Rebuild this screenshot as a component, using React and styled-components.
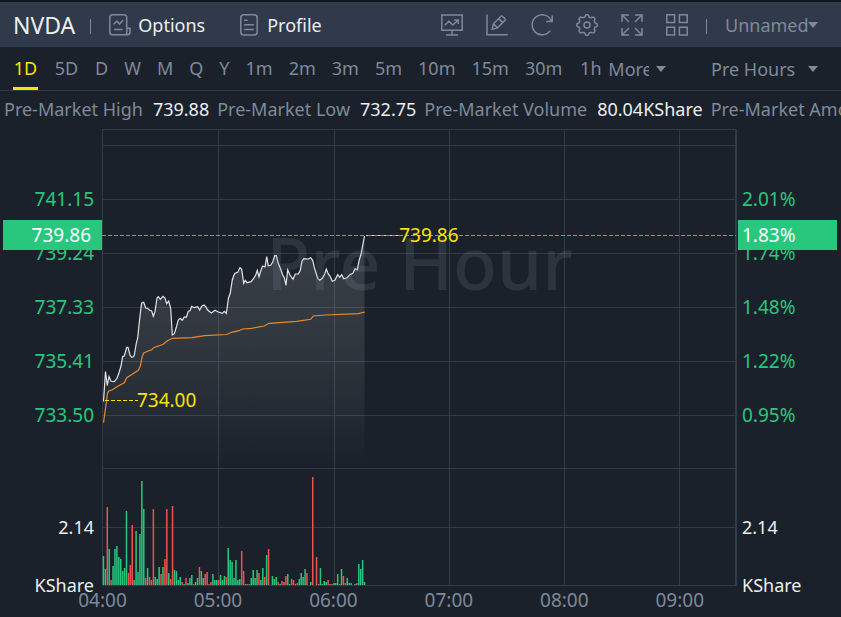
import React from "react";
import styled, { createGlobalStyle, css } from "styled-components";

const color = {
  page: "#1a212a",
  header: "#303a4a",
  line: "#2f3b47",
  muted: "#7f899a",
  text: "#eceef0",
  green: "#28c77e",
  red: "#ef5350",
  yellow: "#fbe106",
  orange: "#e8892b",
};

const GlobalStyle = createGlobalStyle`
  * { box-sizing: border-box; }
  html, body { margin: 0; background: ${color.page}; overflow-x: hidden; }
  body, button, select {
    font-family: "Noto Sans", "Open Sans", sans-serif;
    font-size: 18px;
    line-height: 24px;
  }
`;

const Page = styled.main`
  color: ${color.muted};
  border-top: 2px solid #11161c;
  overflow: hidden;
`;

const Header = styled.header`
  display: flex;
  align-items: center;
  justify-content: space-between;
  height: 45px;
  padding: 0 23px 0 13px;
  background: ${color.header};
`;

const Group = styled.div`
  display: flex;
  align-items: center;
  gap: ${(p) => p.$gap}px;
`;

const Ticker = styled.h1`
  margin: 0;
  font-size: 23px;
  font-weight: 400;
  line-height: 24px;
  color: ${color.text};
`;

const Divider = styled.span`
  width: 1px;
  height: 15px;
  margin-top: 3px;
  background: ${color.muted};
`;

const plainButton = css`
  margin: 0;
  padding: 0;
  border: 0;
  background: none;
  color: inherit;
  cursor: pointer;
`;

const LinkButton = styled.button`
  ${plainButton}
  display: flex;
  align-items: center;
  gap: 7px;
  color: ${color.text};
`;

const ToolButton = styled.button`
  ${plainButton}
  display: flex;
`;

const Icon = styled.svg`
  width: 22px;
  height: 22px;
  flex: none;
  fill: none;
  stroke: ${color.muted};
  stroke-width: 1.5;
`;

const Dropdown = styled.label`
  display: flex;
  align-items: center;
  gap: ${(p) => p.$gap}px;
`;

const Select = styled.select`
  appearance: none;
  width: ${(p) => p.$width}px;
  padding: 0;
  border: 0;
  background: none;
  color: inherit;
  overflow: hidden;
`;

const Caret = styled.svg`
  width: 10px;
  height: 6px;
  fill: ${color.muted};
`;

const PeriodBar = styled.nav`
  display: flex;
  justify-content: space-between;
  height: 44px;
  padding: 0 23px 0 13px;
  border-bottom: 1px solid ${color.line};
`;

const Tab = styled.button`
  ${plainButton}
  height: 43px;
  min-width: ${(p) => (p.$short ? 0 : 25)}px;
  padding-top: 2px;
  border-bottom: 3px solid ${(p) => (p.$active ? color.yellow : "transparent")};
  color: ${(p) => (p.$active ? color.yellow : "inherit")};
`;

const Stats = styled.dl`
  display: flex;
  align-items: center;
  gap: 8px;
  height: 38px;
  margin: 0;
  padding: 0 0 2px 4px;
  white-space: nowrap;
`;

const Stat = styled.div`
  display: flex;
  gap: 10px;
`;

const StatValue = styled.dd`
  margin: 0;
  color: ${color.text};
`;

const Chart = styled.section`
  display: grid;
  grid-template-columns: 102px minmax(0, 1fr) 104px;
  grid-template-rows: auto 28px;
  font-size: 19px;
`;

const Axis = styled.div`
  position: relative;
  grid-row: 1 / 3;
  grid-column: ${(p) => (p.$right ? 3 : 1)};
  display: flex;
  flex-direction: column;
  padding: 43px ${(p) => (p.$right ? "0 0 5px" : "8px 0 0")};
  text-align: ${(p) => (p.$right ? "left" : "right")};
`;

const PriceLabel = styled.span`
  line-height: 54px;
  color: ${color.green};
`;

const VolumeLabel = styled.span`
  line-height: 58px;
  font-size: 18px;
  color: ${color.text};
`;

const VolumeLabels = styled.div`
  display: flex;
  flex-direction: column;
  margin-top: 56px;
`;

const PriceTag = styled.strong`
  position: absolute;
  top: 91px;
  left: ${(p) => (p.$right ? 1 : 3)}px;
  width: 99px;
  padding: 0 ${(p) => (p.$right ? 4 : 11)}px;
  background: ${color.green};
  color: #fff;
  font-weight: 400;
  line-height: 30px;
`;

const Plot = styled.div`
  position: relative;
  grid-column: 2;
  grid-row: 1;
`;

const PlotSvg = styled.svg`
  display: block;
  width: 100%;
  height: 457px;
  fill: none;
`;

const Watermark = styled.span`
  position: absolute;
  inset: 88px 0 auto;
  text-align: center;
  font-weight: 500;
  font-size: 72px;
  line-height: 90px;
  color: rgba(150, 160, 180, 0.15);
`;

const PriceMark = styled.span`
  position: absolute;
  left: ${(p) => p.$left}%;
  top: ${(p) => p.$top}px;
  line-height: 24px;
  color: ${color.yellow};
`;

const TimeAxis = styled.div`
  grid-column: 2;
  grid-row: 2;
  display: grid;
  grid-template-columns: repeat(5, 2fr) 1fr;
`;

const TimeLabel = styled.time`
  display: flex;
  justify-content: center;
  width: 1px;
  line-height: 28px;
`;

const OptionsIcon = () => (
  <Icon viewBox="0 0 22 22">
    <path d="M17.7 14V3.5Q17.7.8 15 .8H3.5Q.8.8.8 3.5V18Q.8 20.8 3.5 20.8H18.3Q21 20.8 21 18V14.3H17.8V18.5Q17.8 20.8 16 20.8" />
    <path d="M4.5 10.5L8 7L10.5 10L14 6.3M5 15.6H13.5" />
  </Icon>
);

const ProfileIcon = () => (
  <Icon viewBox="0 0 22 22">
    <rect x="2.8" y=".8" width="16.4" height="20.2" rx="3" />
    <path d="M6.2 6.2H9.5M6.2 10.7H15.8M6.2 15.4H15.8" />
  </Icon>
);

const gearPath = (() => {
  const points = [];
  for (let i = 0; i < 96; i += 1) {
    const a = (i / 96) * Math.PI * 2;
    const wave = Math.max(-1, Math.min(1, 1.7 * Math.cos(a * 8)));
    const r = 9.2 + wave;
    points.push(`${(11 + r * Math.sin(a)).toFixed(2)} ${(11 - r * Math.cos(a)).toFixed(2)}`);
  }
  return `M${points.join("L")}Z`;
})();

const tools = [
  { name: "Indicators", art: <path d="M.8 1H21.2V16.2H.8ZM11 16.2V20.8M5 20.9H17M3.7 11.2L8 7.2L11.8 11L17 6.2M13.2 5.9H17.3V10" /> },
  { name: "Draw", art: <path d="M1 .5V20.8H21.8M6.2 15.2L7.4 9.8L14.7 2.5Q15.7 1.6 16.7 2.5L18.8 4.6Q19.7 5.6 18.8 6.6L11.5 13.9ZM12.7 4.6L16.7 8.6M7.4 9.8L11.5 13.9" /> },
  { name: "Refresh", art: <path d="M19.3 16.6A10 10 0 1 1 20.5 7.3M21.2 1.5V7.5H15.2" /> },
  { name: "Settings", art: <><path d={gearPath} /><circle cx="11" cy="11" r="3" /></> },
  { name: "Full screen", art: <path d="M1 8V1H8M1.3 1.3L8 8M14 1H21V8M20.7 1.3L14 8M1 14V21H8M1.3 20.7L8 14M21 14V21H14M20.7 20.7L14 14" /> },
  { name: "Layout", art: <path d="M.8 .8H8.6V8.6H.8ZM13.4 .8H21.2V8.6H13.4ZM.8 13.2H8.6V21H.8ZM13.4 13.2H21.2V21H13.4Z" /> },
];

const periods = ["1D", "5D", "D", "W", "M", "Q", "Y", "1m", "2m", "3m", "5m", "10m", "15m", "30m", "1h"];

const stats = [
  ["Pre-Market High", "739.88"],
  ["Pre-Market Low", "732.75"],
  ["Pre-Market Volume", "80.04KShare"],
  ["Pre-Market Amount", "58.93M"],
];

const prices = ["741.15", "739.24", "737.33", "735.41", "733.50"];
const changes = ["2.01%", "1.74%", "1.48%", "1.22%", "0.95%"];
const times = ["04:00", "05:00", "06:00", "07:00", "08:00", "09:00"];

const priceLine =
  "103.5,401.5 105.5,371.5 107.3,385.5 109,376.5 111,381.3 114.3,381.6 117,378.3 119,372.7 121,366 122.7,356.3 124.3,356 126.7,347.3 128,347.3 130,355 131.7,357.3 133.3,356.7 134.3,355 136.3,343.3 137.7,338 139,325 140.7,310 141.7,303 143.7,302.3 145.7,308 147.7,308.3 149.7,310.3 151.7,311 153.3,316.3 155,311.7 157,298 158.3,296.7 160.3,299.3 163,296.3 165,298 166.7,303.7 168.7,301 170.7,308.3 172.3,335 174.3,333.7 176.3,327.3 178.3,320 180.3,318.3 182.3,320.3 184.3,317 186.3,317.3 188.3,311.3 190,310.7 191.7,306.3 194.3,307.7 197.7,306.7 199.7,310 201.7,306.3 204,305 205.7,306.7 207.7,310 211.3,313 215,310.3 217.7,311.7 222.3,313.3 224.3,311.3 226.3,313.5 228.5,298 230.3,293 232.3,280 233.7,275.7 235,273.3 237.7,272.3 240,267.7 241.7,269.3 243.7,283.3 245.3,280.3 247,282.7 251,281.7 253.3,279 255.7,275 257.3,270.3 259,276.7 261,270 262.7,266 265,267 266.7,256.7 268.3,265.7 270.7,265.3 272.7,262 274.7,255.7 276.3,255.7 278.3,263.3 280.7,269.3 282.7,275 284.3,277.7 286,285.3 287.7,269.7 290,275 293,279.3 295.3,274 298.3,274 300.3,270.3 302,261 303.7,258.7 308.3,259 310.7,257.7 312.7,260.3 314.3,267.3 316,273 317.7,278.3 319.7,280.3 322.3,278.3 324.7,274 326.3,269 328.3,274 330,276 332.3,281.3 335,280 337.7,274.7 339.7,277.3 341.7,274.7 343.7,278.7 347,277.7 350,274.7 353,273 355,268.7 357.3,269.7 359.3,259.7 361,254.3 364.5,236";

const averageLine =
  "103.5,422.7 105.3,410 107.5,393.5 108.5,391.3 112.3,389.7 118.3,386 124.3,382.7 126.7,377.7 132.3,374.3 138.3,370.3 140.3,366 142,357.3 143.7,353 148.3,351 151.7,349.7 153.7,347.7 163.3,344.3 167,341 172.3,338.3 191.7,337.7 205,335.7 226.7,334.5 231.7,332.3 239,330.7 242.7,329 251.7,328.3 264.3,326 269,323.3 296.7,321.3 310.7,319.3 313.3,316 325,315 358.3,313.7 365,312";

const volumes =
  "g29 g16 r78 g36 r5 g19 g36 g39 g28 g26 g14 g17 g74 r12 r20 r60 g5 g54 g13 g51 g104 g76 r7 g17 r8 r5 r76 g8 g6 g18 r11 g18 r26 r76 g12 r6 r79 g15 g14 g5 g8 r3 g1 r7 g2 g7 g10 r1 g3 g7 r18 g14 g7 r11 r13 r1 r3 g11 g5 g5 r5 g10 g5 g9 r8 g37 g25 g23 g7 g25 g5 g6 r34 r14 g1 r1 g1 g7 g15 g7 g15 r12 g5 g17 r8 g30 r36 g0 g9 g6 g8 r3 g1 r4 r3 r9 g11 g1 r6 r5 r1 r2 g6 g12 g8 g16 r12 g0 g3 r108 g0 r28 r1 g17 g1 g4 g3 r5 r1 r1 g2 g2 g11 r1 g16 r9 r2 g7 g2 g2 g0 g1 r2 g21 g16 g25 g3"
    .split(" ")
    .map((v) => ({ fill: v[0] === "g" ? color.green : color.red, height: Number(v.slice(1)) }));

const rowLines = [145, 199, 253, 307, 361, 415, 468, 527];
const hourLines = [218, 334, 449, 564, 679];

const CaretDown = () => (
  <Caret viewBox="0 0 10 6" aria-hidden="true">
    <path d="M0 0H10L5 6Z" />
  </Caret>
);

const PricePlot = () => (
  <PlotSvg viewBox="102 129 635 457" preserveAspectRatio="none" role="img" aria-label="Pre-market price and volume">
    <defs>
      <linearGradient id="area" gradientUnits="userSpaceOnUse" x1="0" y1="236" x2="0" y2="468">
        <stop offset="0" stopColor="#fff" stopOpacity=".14" />
        <stop offset=".45" stopColor="#fff" stopOpacity=".1" />
        <stop offset="1" stopColor="#fff" stopOpacity="0" />
      </linearGradient>
    </defs>
    <g stroke={color.line} shapeRendering="crispEdges">
      {rowLines.map((y) => <path key={y} d={`M102 ${y + 0.5}H736`} />)}
      {hourLines.map((x) => <path key={x} d={`M${x + 0.5} 129V586`} />)}
      <path d="M102 129.5H737M102 585.5H737M102.5 129V586" />
      <path d="M736 129V586" strokeWidth="2" />
    </g>
    <polygon points={`103.5,468 ${priceLine} 364.5,468`} fill="url(#area)" />
    {volumes.map((v, i) => (
      <rect key={i} x={102.7 + i * 1.92} y={585 - v.height} width="1.5" height={v.height} fill={v.fill} />
    ))}
    <polyline points={averageLine} stroke={color.orange} strokeWidth="1.2" />
    <polyline points={priceLine} stroke="#e2e4e6" strokeWidth="1.2" />
    <path d="M366 235.5H399M105 400.5H138" stroke={color.yellow} strokeDasharray="4 2" />
    <path d="M102 235.5H365M399 235.5H736" stroke={color.green} strokeDasharray="4 2" />
    <path d="M368 235.5H399" stroke={color.green} strokeDasharray="4 2" />
  </PlotSvg>
);

export default function App() {
  return (
    <Page>
      <GlobalStyle />
      <Header>
        <Group $gap={33}>
          <Group $gap={18}>
            <Group $gap={15}>
              <Ticker>NVDA</Ticker>
              <Divider />
            </Group>
            <LinkButton><OptionsIcon />Options</LinkButton>
          </Group>
          <LinkButton><ProfileIcon />Profile</LinkButton>
        </Group>
        <Group $gap={18}>
          <Group $gap={23}>
            {tools.map((t) => (
              <ToolButton key={t.name} aria-label={t.name}>
                <Icon viewBox="0 0 22 22">{t.art}</Icon>
              </ToolButton>
            ))}
          </Group>
          <Divider />
          <Dropdown $gap={0}>
            <Select $width={83} aria-label="Layout name"><option>Unnamed</option></Select>
            <CaretDown />
          </Dropdown>
        </Group>
      </Header>

      <PeriodBar>
        <Group $gap={5}>
          <Group $gap={16}>
            {periods.map((p, i) => (
              <Tab key={p} $active={i === 0} $short={p.length === 1}>{p}</Tab>
            ))}
          </Group>
          <Dropdown $gap={7}>
            <Select $width={41} aria-label="More periods"><option>More</option></Select>
            <CaretDown />
          </Dropdown>
        </Group>
        <Dropdown $gap={12}>
          <Select $width={85} aria-label="Session"><option>Pre Hours</option></Select>
          <CaretDown />
        </Dropdown>
      </PeriodBar>

      <Stats>
        {stats.map(([label, value]) => (
          <Stat key={label}>
            <dt>{label}</dt>
            <StatValue>{value}</StatValue>
          </Stat>
        ))}
      </Stats>

      <Chart>
        <Axis>
          {prices.map((p) => <PriceLabel key={p}>{p}</PriceLabel>)}
          <VolumeLabels>
            <VolumeLabel>2.14</VolumeLabel>
            <VolumeLabel>KShare</VolumeLabel>
          </VolumeLabels>
          <PriceTag>739.86</PriceTag>
        </Axis>
        <Plot>
          <Watermark>Pre Hour</Watermark>
          <PricePlot />
          <PriceMark $left={46.8} $top={94}>739.86</PriceMark>
          <PriceMark $left={5.5} $top={259}>734.00</PriceMark>
        </Plot>
        <TimeAxis>
          {times.map((t) => <TimeLabel key={t}>{t}</TimeLabel>)}
        </TimeAxis>
        <Axis $right>
          {changes.map((c) => <PriceLabel key={c}>{c}</PriceLabel>)}
          <VolumeLabels>
            <VolumeLabel>2.14</VolumeLabel>
            <VolumeLabel>KShare</VolumeLabel>
          </VolumeLabels>
          <PriceTag $right>1.83%</PriceTag>
        </Axis>
      </Chart>
    </Page>
  );
}
